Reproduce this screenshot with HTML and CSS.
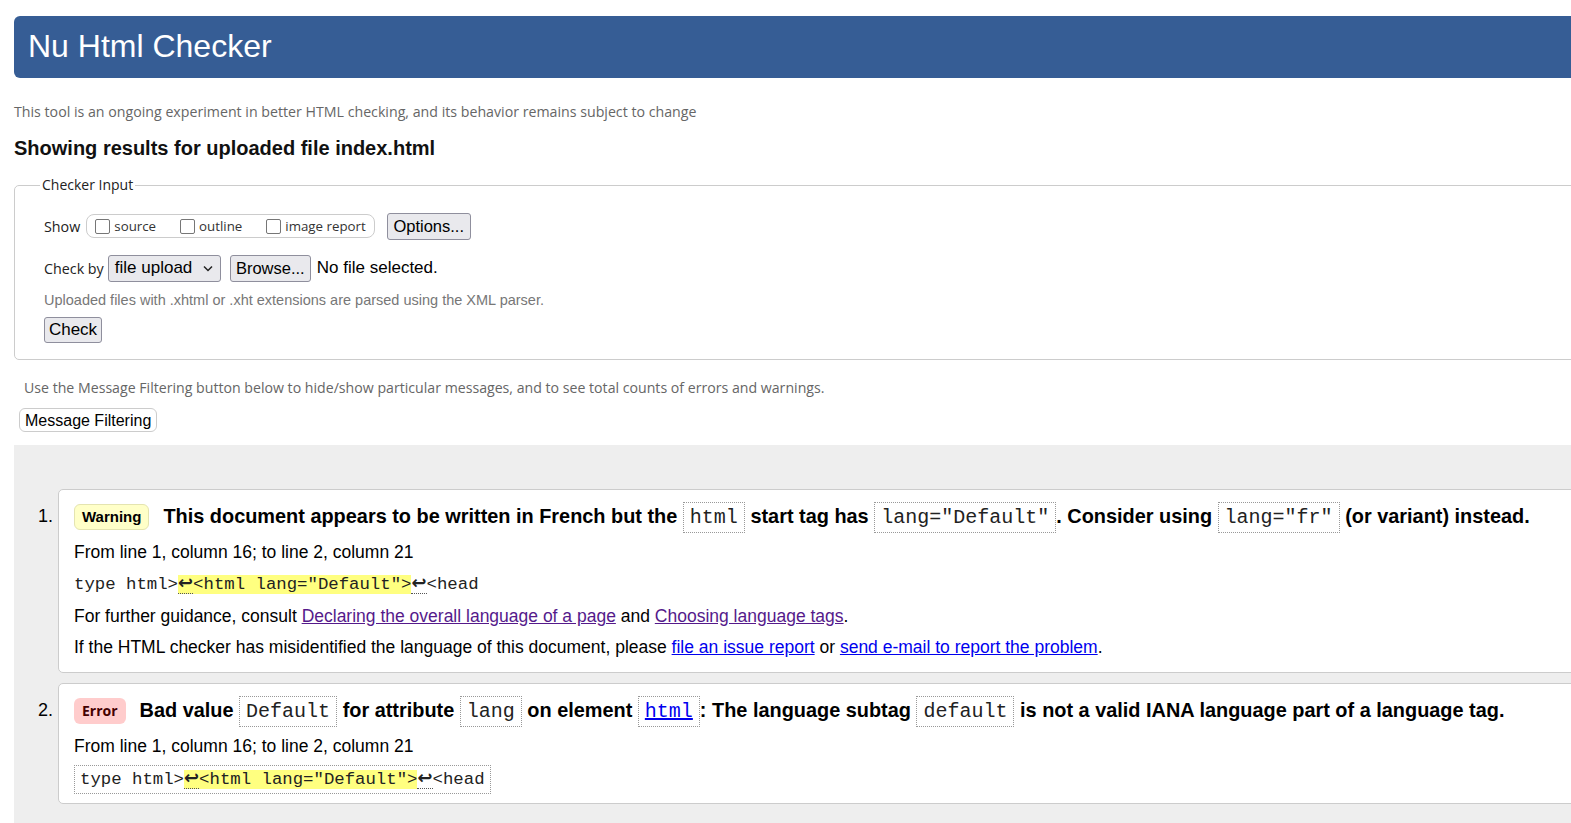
FILE: index.html
```html
<!DOCTYPE html>
<html lang="en">
<head>
<meta charset="utf-8">
<title>Nu Html Checker</title>
<link rel="stylesheet" href="styles.css">
</head>
<body>
<div class="page">
  <h1 class="banner">Nu Html Checker</h1>
  <p class="intro">This tool is an ongoing experiment in better HTML checking, and its behavior remains subject to change</p>
  <h2 class="results-title">Showing results for uploaded file index.html</h2>

  <fieldset class="checker">
    <legend>Checker Input</legend>
    <div class="checker-body">
      <div class="row show-row">
        <span class="lbl">Show</span>
        <span class="opts">
          <label class="opt"><span class="cb"></span>source</label>
          <label class="opt"><span class="cb"></span>outline</label>
          <label class="opt"><span class="cb"></span>image report</label>
        </span>
        <span class="btn btn-options">Options...</span>
      </div>
      <div class="row check-row">
        <span class="lbl">Check by</span>
        <span class="select">file upload
          <svg class="chev" width="10" height="7" viewBox="0 0 10 7"><path d="M1 1.5 L5 5.5 L9 1.5" fill="none" stroke="#222" stroke-width="1.5"/></svg>
        </span>
        <span class="btn btn-browse">Browse...</span>
        <span class="nofile">No file selected.</span>
      </div>
      <p class="note">Uploaded files with .xhtml or .xht extensions are parsed using the XML parser.</p>
      <span class="btn btn-check">Check</span>
    </div>
  </fieldset>

  <p class="filter-note">Use the Message Filtering button below to hide/show particular messages, and to see total counts of errors and warnings.</p>
  <span class="filter-btn">Message Filtering</span>

  <div class="results">
    <ol class="msgs">
      <li class="msg">
        <p class="msg-head"><span class="badge warn">Warning</span> <span class="msg-text">This document appears to be written in French but the <code class="cd">html</code> start tag has <code class="cd">lang="Default"</code>. Consider using <code class="cd">lang="fr"</code> (or variant) instead.</span></p>
        <p class="loc">From line 1, column 16; to line 2, column 21</p>
        <p class="extract"><code>type html&gt;<b class="hl"><span class="lf">↩</span>&lt;html lang="Default"&gt;</b><span class="lf">↩</span>&lt;head</code></p>
        <p class="info">For further guidance, consult <a class="visited" href="#">Declaring the overall language of a page</a> and <a class="visited" href="#">Choosing language tags</a>.</p>
        <p class="info">If the HTML checker has misidentified the language of this document, please <a href="#">file an issue report</a> or <a href="#">send e-mail to report the problem</a>.</p>
      </li>
      <li class="msg">
        <p class="msg-head"><span class="badge err">Error</span> <span class="msg-text">Bad value <code class="cd">Default</code> for attribute <code class="cd">lang</code> on element <code class="cd"><a href="#">html</a></code>: The language subtag <code class="cd">default</code> is not a valid IANA language part of a language tag.</span></p>
        <p class="loc">From line 1, column 16; to line 2, column 21</p>
        <p class="extract boxed"><code>type html&gt;<b class="hl"><span class="lf">↩</span>&lt;html lang="Default"&gt;</b><span class="lf">↩</span>&lt;head</code></p>
      </li>
    </ol>
  </div>
</div>
</body>
</html>
```
FILE: styles.css
```css
html, body {
  margin: 0;
  padding: 0;
  background: #fff;
  overflow: hidden;
}
body {
  font-family: "Liberation Sans", Arial, sans-serif;
  color: #000;
}
.page {
  width: 1620px;
  padding: 16px 0 0 14px;
}
.banner {
  margin: 0;
  height: 62px;
  line-height: 61px;
  padding-left: 14px;
  background: #365d95;
  color: #fff;
  font-weight: normal;
  font-size: 32px;
  border-radius: 6px 0 0 6px;
}
.intro {
  margin: 24px 0 0;
  font-family: "Open Sans", sans-serif;
  font-size: 14.2px;
  line-height: 20px;
  color: #666;
}
.results-title {
  margin: 14px 0 0;
  font-size: 20px;
  line-height: 24px;
  font-weight: bold;
  color: #111;
}
.checker {
  margin: 15px 0 0;
  padding: 0;
  border: 1px solid #ccc;
  border-radius: 5px;
  min-width: 0;
}
.checker legend {
  margin-left: 25px;
  padding: 0 2px;
  font-family: "Open Sans", sans-serif;
  font-size: 14px;
  line-height: 20px;
  color: #222;
}
.checker-body {
  padding: 17px 0 16px 29px;
}
.row {
  display: flex;
  align-items: center;
}
.lbl {
  font-family: "Open Sans", sans-serif;
  font-size: 14.3px;
  color: #222;
  margin-right: 5px;
}
.show-row { height: 28px; }
.opts {
  display: flex;
  align-items: center;
  gap: 24px;
  height: 22px;
  padding: 0 8px 0 8px;
  border: 1px solid #ccc;
  border-radius: 8px;
  margin-right: 12px;
  margin-left: 1px;
}
.opt {
  display: flex;
  align-items: center;
  font-family: "Open Sans", sans-serif;
  font-size: 13.3px;
  color: #333;
}
.cb {
  width: 13px;
  height: 13px;
  border: 1px solid #767676;
  border-radius: 2px;
  margin-right: 4px;
  background: #fff;
}
.btn {
  display: inline-flex;
  align-items: center;
  justify-content: center;
  background: #e9e9ed;
  border: 1px solid #8f8f9d;
  border-radius: 3px;
  font-family: "Liberation Sans", Arial, sans-serif;
  font-size: 16.5px;
  color: #000;
  box-sizing: border-box;
}
.btn-options { width: 84px; height: 27px; }
.check-row { margin-top: 14px; height: 28px; }
.select {
  display: inline-flex;
  align-items: center;
  box-sizing: border-box;
  height: 27px;
  width: 113px;
  padding: 0 6px;
  background: #e9e9ed;
  border: 1px solid #8f8f9d;
  border-radius: 3px;
  font-size: 17px;
  margin-left: -1px;
  margin-right: 9px;
}
.chev { margin-left: 11px; }
.btn-browse { width: 81px; height: 27px; margin-right: 6px; }
.nofile { font-size: 17px; }
.note {
  margin: 8px 0 0;
  font-size: 14.5px;
  line-height: 20px;
  color: #777;
}
.btn-check {
  margin-top: 7px;
  width: 58px;
  height: 26px;
  font-size: 17px;
}
.filter-note {
  margin: 18px 0 0 10px;
  font-family: "Open Sans", sans-serif;
  font-size: 14.15px;
  line-height: 20px;
  color: #666;
}
.filter-btn {
  display: inline-block;
  margin: 10px 0 0 5px;
  height: 24px;
  line-height: 23px;
  padding: 0 5px 0 5px;
  border: 1px solid #ccc;
  border-radius: 6px;
  background: #fff;
  font-size: 16px;
  box-sizing: border-box;
}
.results {
  margin-top: 13px;
  background: #eee;
  padding: 44px 0 30px 44px;
}
.msgs {
  margin: 0;
  padding: 0;
  list-style: none;
  counter-reset: m;
}
.msg {
  counter-increment: m;
  position: relative;
  background: #fff;
  border: 1px solid #ccc;
  border-radius: 5px 0 0 5px;
  padding: 11px 0 8px 15px;
  margin-bottom: 10px;
}
.msg::before {
  content: counter(m) ".";
  position: absolute;
  left: -21px;
  top: 13px;
  font-size: 18px;
  line-height: 26px;
}
.msg p { margin: 0; }
.msg-head {
  font-size: 19.9px;
  font-weight: bold;
  line-height: 30px;
  display: flex;
  align-items: center;
}
.msg-text { margin-left: 14px; }
.badge {
  display: inline-block;
  height: 26px;
  line-height: 26px;
  box-sizing: border-box;
  border-radius: 6px;
  font-size: 14px;
  font-weight: bold;
  flex: none;
}
.warn {
  background: #ffffc8;
  border: 1px solid #e4e4b0;
  padding: 0 7px;
  line-height: 24px;
  font-size: 15px;
  font-family: "Liberation Sans", Arial, sans-serif;
}
.err {
  background: #ffcccc;
  padding: 0 8px;
  font-family: "Open Sans", sans-serif;
  color: #400;
}
.cd {
  font-family: "Liberation Mono", "Courier New", monospace;
  font-weight: normal;
  font-size: 20px;
  border: 1px dotted #999;
  padding: 3px 6px;
  margin: 0;
  color: #222;
}
.cd a { color: #00e; }
.loc {
  font-size: 17.5px;
  line-height: 22px;
  margin-top: 8px !important;
}
.extract {
  margin-top: 10px !important;
  line-height: 22px;
}
.extract code {
  font-family: "Liberation Mono", "Courier New", monospace;
  font-size: 17.33px;
  color: #222;
}
.extract.boxed {
  display: inline-block;
  border: 1px dotted #999;
  padding: 2px 5px 2px 5px;
  margin-top: 8px !important;
  margin-bottom: 1px !important;
}
.hl {
  font-weight: normal;
  background: #ffff80;
}
.lf {
  font-family: "DejaVu Sans", sans-serif;
  font-weight: bold;
  font-size: 18px;
  line-height: 18px;
  border-bottom: 1px dotted #555;
}
.info {
  font-size: 17.5px;
  line-height: 22px;
  margin-top: 9px !important;
}
.info:last-child { margin-bottom: 6px !important; }
a { color: #00e; }
a.visited { color: #551a8b; }
```
